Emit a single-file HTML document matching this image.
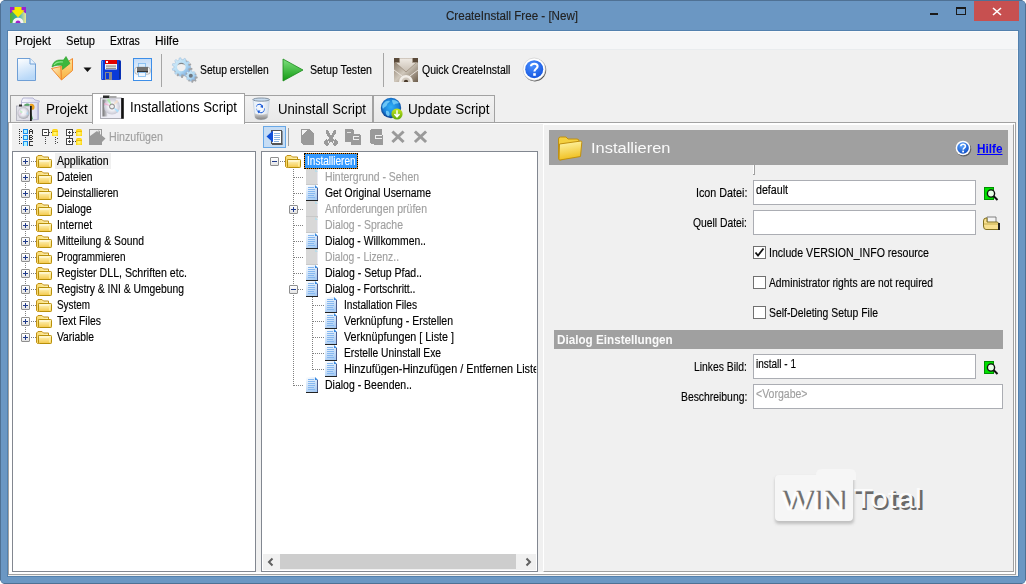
<!DOCTYPE html>
<html><head><meta charset="utf-8"><style>
html,body{margin:0;padding:0;}
body{width:1026px;height:584px;position:relative;overflow:hidden;background:#fff;font-family:"Liberation Sans",sans-serif;}
</style></head><body>
<div style="position:absolute;left:0px;top:0px;width:1026px;height:584px;background:#6b97c3;box-shadow:inset 0 0 0 1px #4f7194;border-radius:4px"></div><div style="position:absolute;left:7px;top:30px;width:1012px;height:547px;background:#5381ae"></div><div style="position:absolute;left:8px;top:31px;width:1010px;height:545px;background:#f0f0f0"></div><div style="position:absolute;left:8px;top:31px;width:1010px;height:1px;background:#fbfbfb"></div><div style="position:absolute;left:1017px;top:31px;width:1px;height:545px;background:#fafafa"></div><div style="position:absolute;left:8px;top:32px;width:1010px;height:17px;background:#f5f6f7"></div><div style="position:absolute;left:8px;top:49px;width:1010px;height:1px;background:#e9ecee"></div><svg style="position:absolute;left:10px;top:7px" width="16" height="16" viewBox="0 0 16 16">
<defs><linearGradient id="gl" x1="0" y1="0" x2="1" y2="0"><stop offset="0" stop-color="#58b028"/><stop offset="0.5" stop-color="#28a8c8"/><stop offset="1" stop-color="#f0e890"/></linearGradient></defs>
<rect width="16" height="16" fill="url(#gl)"/>
<path d="M0 0 H5 V3 L0 6.5Z M16 0 H11 V3 L16 6.5Z" fill="#9a20d0"/>
<path d="M4.5 0 H11.5 V3 L14.5 3.5 L8 10.5 L1.5 3.5 L4.5 3Z" fill="#f4ec00"/>
<path d="M2.5 16 A5.5 5.5 0 0 1 13.5 16Z" fill="#f4f4f4"/><path d="M5.5 16 A2.5 2.5 0 0 1 10.5 16Z" fill="#a020c8"/>
</svg><svg style="position:absolute;left:0;top:0" width="1026" height="584" viewBox="0 0 1026 584"><g fill="#fff">
<path d="M0 0 H4 Q1 1 0 4Z"/><path d="M1026 0 H1022 Q1025 1 1026 4Z"/><path d="M0 584 H4 Q1 583 0 580Z"/><path d="M1026 584 H1022 Q1025 583 1026 580Z"/></g></svg><div style="position:absolute;left:974px;top:1px;width:45px;height:20px;background:#c75050"></div><svg style="position:absolute;left:992px;top:7px" width="10" height="9" viewBox="0 0 10 9"><path d="M1 1 L9 8 M9 1 L1 8" stroke="#fff" stroke-width="1.6"/></svg><div style="position:absolute;left:930px;top:13px;width:8px;height:2px;background:#1a1a1a"></div><div style="position:absolute;left:956px;top:7px;width:10px;height:8px;box-sizing:border-box;border:1px solid #1a1a1a;border-top-width:2px"></div><svg style="position:absolute;left:16px;top:57px" width="21" height="25" viewBox="0 0 21 25">
<defs><linearGradient id="nd" x1="0" y1="0" x2="0.3" y2="1"><stop offset="0" stop-color="#ffffff"/><stop offset="1" stop-color="#b8d8f8"/></linearGradient></defs>
<path d="M1.5 1.5 H14 L19.5 7 V23.5 H1.5Z" fill="url(#nd)" stroke="#6f9fd6" stroke-width="1"/>
<path d="M14 1.5 V7 H19.5" fill="#e8f2fc" stroke="#6f9fd6" stroke-width="1"/>
</svg><svg style="position:absolute;left:46px;top:54px" width="32" height="30" viewBox="0 0 32 30">
<defs><linearGradient id="of" x1="0" y1="0" x2="1" y2="1"><stop offset="0" stop-color="#fff0c8"/><stop offset="1" stop-color="#f8b040"/></linearGradient>
<linearGradient id="of2" x1="0" y1="0" x2="0" y2="1"><stop offset="0" stop-color="#ffe090"/><stop offset="1" stop-color="#f8b040"/></linearGradient></defs>
<path d="M5.5 14.5 L15 12.5 L15.5 26 Z" fill="url(#of)" stroke="#f08a30" stroke-width="1"/>
<path d="M15 12.5 L26.5 4.5 V16.5 L15.5 26 Z" fill="url(#of2)" stroke="#f08a30" stroke-width="1"/>
<path d="M6 13 C7 8 10 6 14 6 H17.5 L20 2.5 L24 9.5 L16.5 15.5 L16.5 11.5 C13 11 9 11 6 13 Z" fill="#3cb83c" stroke="#2a9a2a" stroke-width="0.6"/>
<path d="M8 11 C10 8 13 7.5 17 8" fill="none" stroke="#8ae88a" stroke-width="1.2"/>
</svg><svg style="position:absolute;left:83px;top:67px" width="9" height="6" viewBox="0 0 9 6"><path d="M0.5 0.5 H8.5 L4.5 5Z" fill="#111"/></svg><svg style="position:absolute;left:101px;top:60px" width="20" height="20" viewBox="0 0 20 20">
<rect x="0" y="0" width="20" height="20" rx="1.5" fill="#0a3ad8"/>
<rect x="0.5" y="1" width="1.5" height="18" fill="#4a8af8"/><rect x="18" y="1" width="1.5" height="18" fill="#0a2a90"/>
<rect x="4" y="0" width="12" height="4" fill="#e00000"/><rect x="5" y="1" width="2" height="2" fill="#fff"/>
<rect x="4" y="4" width="12" height="5.5" fill="#f4f2ee"/>
<rect x="5" y="5.6" width="10" height="0.9" fill="#6a6a6a"/><rect x="5" y="7.8" width="10" height="0.9" fill="#6a6a6a"/>
<rect x="4" y="12" width="7" height="8" fill="#8a8a8a"/><rect x="5" y="13" width="3" height="6" fill="#0a3ad8"/>
</svg><div style="position:absolute;left:133px;top:58px;width:19px;height:23px;box-sizing:border-box;border:1px solid #3d8ee8;background:linear-gradient(#c4dcf8,#ffffff)"></div><svg style="position:absolute;left:134px;top:62px" width="17" height="16" viewBox="0 0 17 16">
<rect x="4.5" y="1.5" width="7" height="4" fill="#d8ecff" stroke="#7ab8f0" stroke-width="0.8"/>
<rect x="0.8" y="5.2" width="15.4" height="7" rx="2.5" fill="#f4f4f4" stroke="#a0a0a0" stroke-width="0.7"/>
<rect x="3" y="5" width="11" height="4" fill="#707070"/><rect x="3" y="9" width="11" height="1.5" fill="#303030"/>
<rect x="4.5" y="10.5" width="7" height="4" fill="#eef6ff" stroke="#7ab8f0" stroke-width="0.8"/>
</svg><div style="position:absolute;left:161px;top:54px;width:1px;height:33px;background:#a6a6a6"></div><svg style="position:absolute;left:170px;top:56px" width="28" height="28" viewBox="0 0 28 28">
<defs><linearGradient id="gr" x1="0" y1="0" x2="1" y2="1"><stop offset="0" stop-color="#d8eefa"/><stop offset="0.6" stop-color="#b0daf4"/><stop offset="1" stop-color="#6a9ad8"/></linearGradient></defs>
<path d="M19.61 10.64 L21.45 10.88 L21.45 12.72 L19.61 12.96 L19.07 14.78 L20.50 15.98 L19.50 17.52 L17.82 16.73 L16.39 17.97 L16.94 19.75 L15.27 20.51 L14.28 18.93 L12.41 19.20 L11.91 20.99 L10.09 20.73 L10.11 18.87 L8.39 18.08 L7.00 19.32 L5.61 18.12 L6.64 16.57 L5.61 14.97 L3.78 15.26 L3.26 13.50 L4.96 12.75 L4.96 10.85 L3.26 10.10 L3.78 8.34 L5.61 8.63 L6.64 7.03 L5.61 5.48 L7.00 4.28 L8.39 5.52 L10.11 4.73 L10.09 2.87 L11.91 2.61 L12.41 4.40 L14.28 4.67 L15.27 3.09 L16.94 3.85 L16.39 5.63 L17.82 6.87 L19.50 6.08 L20.50 7.62 L19.07 8.82Z" fill="#404850" opacity="0.45" transform="translate(0.9,1.1)"/>
<path d="M18.61 9.84 L20.45 10.08 L20.45 11.92 L18.61 12.16 L18.07 13.98 L19.50 15.18 L18.50 16.72 L16.82 15.93 L15.39 17.17 L15.94 18.95 L14.27 19.71 L13.28 18.13 L11.41 18.40 L10.91 20.19 L9.09 19.93 L9.11 18.07 L7.39 17.28 L6.00 18.52 L4.61 17.32 L5.64 15.77 L4.61 14.17 L2.78 14.46 L2.26 12.70 L3.96 11.95 L3.96 10.05 L2.26 9.30 L2.78 7.54 L4.61 7.83 L5.64 6.23 L4.61 4.68 L6.00 3.48 L7.39 4.72 L9.11 3.93 L9.09 2.07 L10.91 1.81 L11.41 3.60 L13.28 3.87 L14.27 2.29 L15.94 3.05 L15.39 4.83 L16.82 6.07 L18.50 5.28 L19.50 6.82 L18.07 8.02Z" fill="url(#gr)" stroke="#98b8d8" stroke-width="0.5"/>
<circle cx="11.3" cy="11" r="4.3" fill="#f0f0f0"/>
<path d="M7 11 A4.3 4.3 0 0 1 15.6 11 A4.3 3 0 0 0 7 11Z" fill="#505860" opacity="0.7"/>
<path d="M25.60 19.60 L26.85 19.76 L26.85 21.24 L25.60 21.40 L25.04 22.76 L25.81 23.76 L24.76 24.81 L23.76 24.04 L22.40 24.60 L22.24 25.85 L20.76 25.85 L20.60 24.60 L19.24 24.04 L18.24 24.81 L17.19 23.76 L17.96 22.76 L17.40 21.40 L16.15 21.24 L16.15 19.76 L17.40 19.60 L17.96 18.24 L17.19 17.24 L18.24 16.19 L19.24 16.96 L20.60 16.40 L20.76 15.15 L22.24 15.15 L22.40 16.40 L23.76 16.96 L24.76 16.19 L25.81 17.24 L25.04 18.24Z" fill="#404850" opacity="0.45" transform="translate(0.8,1)"/>
<path d="M24.90 18.80 L26.15 18.96 L26.15 20.44 L24.90 20.60 L24.34 21.96 L25.11 22.96 L24.06 24.01 L23.06 23.24 L21.70 23.80 L21.54 25.05 L20.06 25.05 L19.90 23.80 L18.54 23.24 L17.54 24.01 L16.49 22.96 L17.26 21.96 L16.70 20.60 L15.45 20.44 L15.45 18.96 L16.70 18.80 L17.26 17.44 L16.49 16.44 L17.54 15.39 L18.54 16.16 L19.90 15.60 L20.06 14.35 L21.54 14.35 L21.70 15.60 L23.06 16.16 L24.06 15.39 L25.11 16.44 L24.34 17.44Z" fill="url(#gr)" stroke="#98b8d8" stroke-width="0.5"/>
<circle cx="20.8" cy="19.7" r="2" fill="#707880"/>
</svg><svg style="position:absolute;left:282px;top:58px" width="22" height="24" viewBox="0 0 22 24">
<defs><linearGradient id="pl" x1="0" y1="0" x2="0" y2="1"><stop offset="0" stop-color="#7ee07e"/><stop offset="1" stop-color="#119a11"/></linearGradient></defs>
<path d="M1 1 L21 12 L1 23Z" fill="url(#pl)" stroke="#1a8a1a" stroke-width="0.8"/>
</svg><div style="position:absolute;left:383px;top:53px;width:1px;height:34px;background:#a6a6a6"></div><svg style="position:absolute;left:394px;top:58px" width="24" height="24" viewBox="0 0 24 24">
<defs><linearGradient id="qc" x1="0" y1="0" x2="1" y2="1"><stop offset="0" stop-color="#7a6a58"/><stop offset="0.5" stop-color="#d0c8bc"/><stop offset="1" stop-color="#6e5e4c"/></linearGradient>
<linearGradient id="qa" x1="0" y1="0" x2="0" y2="1"><stop offset="0" stop-color="#f0ebe4"/><stop offset="1" stop-color="#c8beb2"/></linearGradient></defs>
<rect width="24" height="24" fill="url(#qc)"/>
<path d="M0 0 H5 V4 L1 4 L0 5Z M24 0 H19 V4 L23 4 L24 5Z" fill="#5a4a3a"/>
<path d="M5.5 0 H18.5 V4.5 L22.5 4.5 L12 14 L1.5 4.5 L5.5 4.5Z" fill="url(#qa)" stroke="#8a7a68" stroke-width="0.6"/>
<path d="M0 12 L12 21 L24 12" fill="none" stroke="#e8e2da" stroke-width="1"/>
<circle cx="12" cy="24" r="7" fill="#f2eee8"/><circle cx="12" cy="24" r="4.5" fill="#d0c8be"/><circle cx="12" cy="24" r="2.2" fill="#4a3a2a"/>
</svg><svg style="position:absolute;left:522px;top:57px" width="25" height="25" viewBox="0 0 25 25">
<defs><radialGradient id="hb" cx="0.4" cy="0.3" r="0.7"><stop offset="0" stop-color="#4a90ff"/><stop offset="1" stop-color="#1858e0"/></radialGradient></defs>
<circle cx="12.9" cy="13.1" r="11.3" fill="#222" opacity="0.75"/>
<circle cx="12.2" cy="12.2" r="11.2" fill="#fff" stroke="#c8c8c8" stroke-width="0.6"/>
<circle cx="12.2" cy="12.2" r="9" fill="url(#hb)"/>
<path d="M9 9.3 C9 5.8 15.6 5.8 15.6 9.3 C15.6 11.8 12.6 11.8 12.4 14.5" fill="none" stroke="#fff" stroke-width="2.1"/>
<rect x="11.2" y="16.2" width="2.6" height="2.6" fill="#fff"/>
</svg><div style="position:absolute;left:8px;top:122px;width:1008px;height:453px;box-sizing:border-box;border:1px solid #a2a2a2;background:#fff"></div><div style="position:absolute;left:10px;top:95px;width:83px;height:27px;box-sizing:border-box;border:1px solid #a2a2a2;border-bottom:none;background:linear-gradient(#f2f2f2,#e8e8e8)"></div><div style="position:absolute;left:244px;top:95px;width:129px;height:27px;box-sizing:border-box;border:1px solid #a2a2a2;border-bottom:none;background:linear-gradient(#f2f2f2,#e8e8e8)"></div><div style="position:absolute;left:373px;top:95px;width:122px;height:27px;box-sizing:border-box;border:1px solid #a2a2a2;border-bottom:none;background:linear-gradient(#f2f2f2,#e8e8e8)"></div><div style="position:absolute;left:92px;top:93px;width:153px;height:31px;box-sizing:border-box;border:1px solid #a2a2a2;border-bottom:none;background:#fff"></div><svg style="position:absolute;left:16px;top:97px" width="24" height="24" viewBox="0 0 24 24">
<defs><linearGradient id="bx" x1="0" y1="0" x2="1" y2="0"><stop offset="0" stop-color="#fafaff"/><stop offset="1" stop-color="#d8d8ec"/></linearGradient>
<radialGradient id="cd" cx="0.45" cy="0.45" r="0.55"><stop offset="0" stop-color="#ffffff"/><stop offset="0.5" stop-color="#e8e8f0"/><stop offset="1" stop-color="#a8a8b0"/></radialGradient></defs>
<path d="M5.5 4 L7 1 H17 L19 3 L23.5 4 L22.5 6 V22.5 L7 23.5 L5.5 22Z" fill="url(#bx)" stroke="#a8a8cc" stroke-width="0.8"/>
<path d="M6 5.5 H21.5 M21.5 5.5 V22.5" stroke="#b8b8d8" stroke-width="0.8" fill="none"/>
<path d="M8 8 C10 6 13 6 14 8 C12 10 9 10 8 8Z" fill="#58a868"/>
<path d="M14 7 C17 6 19 8 18.5 11 C18 13 16 13.5 15 12 C16 11 16 9 14 9Z" fill="#e8a020"/>
<path d="M15 15 L17 22 L15 23Z" fill="#58a868"/>
<rect x="0.5" y="9" width="14" height="14.5" fill="#e0e0e8" stroke="#9a9aa8" stroke-width="0.6"/>
<rect x="3" y="7.5" width="3" height="2" fill="#303030"/>
<circle cx="7.5" cy="16" r="6" fill="url(#cd)"/>
<path d="M4 13 L7 15 L4.5 17Z" fill="#a0e8a8" opacity="0.6"/><path d="M10 17 L12 14 L12.5 18Z" fill="#a8d8f8" opacity="0.7"/><path d="M3.5 15 L6 16.5 L3.8 18Z" fill="#f0a8e0" opacity="0.5"/>
<rect x="14" y="9" width="1.8" height="15" fill="#1a1a1a"/>
</svg><svg style="position:absolute;left:100px;top:95px" width="24" height="24" viewBox="0 0 24 24">
<defs><radialGradient id="cd2" cx="0.5" cy="0.5" r="0.5"><stop offset="0" stop-color="#fff"/><stop offset="0.3" stop-color="#d0d0d8"/><stop offset="0.45" stop-color="#f4f4f8"/><stop offset="1" stop-color="#c8c8d4"/></radialGradient>
<linearGradient id="csh" x1="0" y1="0" x2="1" y2="0"><stop offset="0" stop-color="#707070"/><stop offset="1" stop-color="#e0e0e8"/></linearGradient></defs>
<rect x="0.5" y="3" width="21" height="20.5" fill="#eeeef6" stroke="#9a9aa4" stroke-width="0.8"/>
<rect x="2.5" y="4.5" width="5" height="17" fill="url(#csh)"/>
<rect x="3" y="0.5" width="6.5" height="2.5" fill="#2a2a2a"/><rect x="9.5" y="1" width="7" height="2" fill="#a8a8a8"/>
<circle cx="12" cy="11.5" r="8" fill="url(#cd2)"/>
<path d="M12 11.5 L6.5 4.5 A8 8 0 0 1 9.5 3.8Z" fill="#a8f0a0" opacity="0.8"/>
<path d="M12 11.5 L4.2 9.5 A8 8 0 0 1 4.8 7.8Z" fill="#f8a8d0" opacity="0.8"/>
<path d="M12 11.5 L19 15.5 A8 8 0 0 1 17.5 17.5Z" fill="#a8e0ff" opacity="0.9"/>
<path d="M12 11.5 L16.5 4.8 A8 8 0 0 1 18.5 6.8Z" fill="#f8e0c8" opacity="0.8"/>
<circle cx="12" cy="11.5" r="2.4" fill="#f0f0f0" stroke="#808080" stroke-width="0.9"/>
<rect x="21.2" y="3" width="2.6" height="20.8" fill="#111"/>
</svg><svg style="position:absolute;left:252px;top:97px" width="20" height="24" viewBox="0 0 20 24">
<defs><linearGradient id="tr" x1="0" y1="0" x2="1" y2="0"><stop offset="0" stop-color="#e4eef8"/><stop offset="0.5" stop-color="#f8fbfe"/><stop offset="1" stop-color="#d0dcea"/></linearGradient>
<linearGradient id="trb" x1="0" y1="0" x2="0" y2="1"><stop offset="0" stop-color="#d8d8d8"/><stop offset="1" stop-color="#808080"/></linearGradient></defs>
<path d="M1 2.5 L3 20.5 C5 23.5 13 23.5 15.5 20.5 L17.5 2.5Z" fill="url(#tr)" stroke="#b8c8d8" stroke-width="0.6"/>
<path d="M2.5 16 C6 18 12 18 16 16 L15.5 20.5 C13 23.5 5 23.5 3 20.5Z" fill="url(#trb)"/>
<ellipse cx="9.2" cy="2.6" rx="8.3" ry="1.6" fill="#c8dcf0" stroke="#7a8a9a" stroke-width="0.9"/>
<path d="M4.5 10 C5 7.5 8 7 9.5 9 L8 10 L11 11 L11 8 L10.5 8.5 C8.5 5.5 4.5 6.5 4 10Z" fill="#1a5ad8"/>
<path d="M12 11.5 C12.5 14 10 16 7.5 15 L8.5 13.5 L5 13.5 L6.5 16.5 L7 15.8 C10 17.5 13.5 14.5 12.5 11Z" fill="#1a5ad8"/>
<path d="M4 11 L5.5 13 L4 13.5Z" fill="#8ab0f0"/>
</svg><svg style="position:absolute;left:380px;top:97px" width="23" height="23" viewBox="0 0 23 23">
<defs><radialGradient id="gb" cx="0.5" cy="0.45" r="0.55"><stop offset="0" stop-color="#30b0f8"/><stop offset="0.7" stop-color="#1a80d8"/><stop offset="1" stop-color="#0a3a88"/></radialGradient>
<linearGradient id="gg" x1="0" y1="0" x2="0" y2="1"><stop offset="0" stop-color="#c8e820"/><stop offset="1" stop-color="#60a808"/></linearGradient></defs>
<circle cx="11" cy="11" r="10.2" fill="url(#gb)"/>
<path d="M3 7 C5 4 8 3 10 4 C9 6 7 6 7 8 C6 10 4 10 3 12 C2 10 2 9 3 7Z M12 3 C15 2.5 18 4 19 6 C17 7 15 6 14 8 C13 7 12 5 12 3Z M6 14 C8 13 10 15 9.5 18 C9 20 7 19 6 17Z" fill="#78d0fa" opacity="0.85"/>
<circle cx="17" cy="17" r="5.6" fill="url(#gg)"/>
<path d="M17 13.3 V19.5 M14.5 17 L17 19.8 L19.5 17" fill="none" stroke="#fff" stroke-width="1.5"/>
</svg><div style="position:absolute;left:12px;top:124px;width:531px;height:448px;background:#f0f0f0"></div><div style="position:absolute;left:543px;top:124px;width:471px;height:448px;box-sizing:border-box;background:#f0f0f0;border:1px solid #fff;border-right-color:#a0a0a0;border-bottom-color:#a0a0a0"></div><svg style="position:absolute;left:19px;top:129px" width="16" height="17" viewBox="0 0 16 17" shape-rendering="crispEdges">
<g fill="#333"><rect x="0" y="0" width="1" height="1"/><rect x="0" y="2" width="1" height="1"/><rect x="0" y="4" width="1" height="1"/><rect x="0" y="6" width="1" height="1"/><rect x="0" y="8" width="1" height="1"/><rect x="0" y="10" width="1" height="1"/><rect x="0" y="12" width="1" height="1"/><rect x="0" y="14" width="1" height="1"/>
<rect x="2" y="2" width="1" height="1"/><rect x="2" y="8" width="1" height="1"/><rect x="2" y="14" width="1" height="1"/></g>
<g fill="#1a8ff0"><rect x="4" y="0" width="5" height="5"/><rect x="4" y="6" width="5" height="5"/><rect x="4" y="12" width="5" height="5"/></g>
<g fill="#b0f4ff"><rect x="5" y="1" width="3" height="3"/><rect x="5" y="7" width="3" height="3"/><rect x="5" y="13" width="3" height="4"/></g>
<g fill="#333"><rect x="10" y="1" width="1" height="4"/><rect x="13" y="1" width="1" height="4"/><rect x="11" y="0" width="2" height="1"/><rect x="10" y="2" width="4" height="1"/>
<rect x="10" y="6" width="1" height="5"/><rect x="11" y="6" width="2" height="1"/><rect x="11" y="8" width="2" height="1"/><rect x="11" y="10" width="2" height="1"/><rect x="13" y="7" width="1" height="1"/><rect x="13" y="9" width="1" height="1"/>
<rect x="10" y="12" width="1" height="5"/><rect x="11" y="12" width="3" height="1"/><rect x="11" y="16" width="3" height="1"/></g>
</svg><svg style="position:absolute;left:42px;top:129px" width="16" height="16" viewBox="0 0 16 16" shape-rendering="crispEdges">
<defs><radialGradient id="yf" cx="0.5" cy="0.6" r="0.6"><stop offset="0" stop-color="#ffff90"/><stop offset="1" stop-color="#ffd000"/></radialGradient></defs>
<rect x="0.5" y="0.5" width="6" height="6" fill="#fff" stroke="#444"/><rect x="2" y="3" width="3" height="1" fill="#444"/>
<g fill="#444"><rect x="7" y="3" width="1" height="1"/><rect x="9" y="3" width="1" height="1"/>
<rect x="3" y="8" width="1" height="1"/><rect x="3" y="10" width="1" height="1"/><rect x="3" y="12" width="1" height="1"/><rect x="3" y="14" width="1" height="1"/>
<rect x="13" y="8" width="1" height="1"/><rect x="13" y="10" width="1" height="1"/><rect x="13" y="12" width="1" height="1"/><rect x="13" y="14" width="1" height="1"/><rect x="15" y="9" width="1" height="1"/><rect x="15" y="13" width="1" height="1"/></g>
<path d="M10 2 Q10 0 12 0 H14 Q16 0 16 2 V7 H10Z" fill="url(#yf)" shape-rendering="auto"/>
<rect x="10" y="2" width="6" height="1" fill="#f0c000"/>
</svg><svg style="position:absolute;left:66px;top:129px" width="16" height="16" viewBox="0 0 16 16" shape-rendering="crispEdges">
<rect x="0.5" y="0.5" width="6" height="6" fill="#fff" stroke="#444"/><path d="M2 3.5 H5 M3.5 2 V5" stroke="#444"/>
<rect x="0.5" y="9.5" width="6" height="6" fill="#fff" stroke="#444"/><path d="M2 12.5 H5 M3.5 11 V14" stroke="#444"/>
<rect x="3" y="7" width="1" height="2" fill="#444"/>
<rect x="7" y="3" width="1" height="1" fill="#444"/><rect x="9" y="3" width="1" height="1" fill="#444"/><rect x="7" y="12" width="1" height="1" fill="#444"/><rect x="9" y="12" width="1" height="1" fill="#444"/>
<path d="M10 2 Q10 0 12 0 H14 Q16 0 16 2 V7 H10Z" fill="url(#yf)" shape-rendering="auto"/><rect x="10" y="2" width="6" height="1" fill="#f0c000"/>
<path d="M10 11 Q10 9 12 9 H14 Q16 9 16 11 V16 H10Z" fill="url(#yf)" shape-rendering="auto"/><rect x="10" y="11" width="6" height="1" fill="#f0c000"/>
</svg><svg style="position:absolute;left:89px;top:129px" width="17" height="16" viewBox="0 0 17 16">
<rect x="0" y="0" width="13" height="16" fill="#9a9a9a"/>
<rect x="1" y="1" width="11" height="6" fill="#eeeeee"/>
<path d="M1 7 L8 2 L9.5 3.5 L9.5 1 L11 2.5 V5 L16.5 9.5 L13 13 V7Z" fill="#9a9a9a"/>
</svg><div style="position:absolute;left:263px;top:126px;width:23px;height:22px;box-sizing:border-box;border:1px solid #69a8e6;background:#c6ddf5"></div><svg style="position:absolute;left:266px;top:129px" width="17" height="16" viewBox="0 0 17 16">
<rect x="5.5" y="1.5" width="10" height="13" fill="#fff" stroke="#555" stroke-width="1"/>
<rect x="15" y="2" width="1.5" height="13.5" fill="#555"/><rect x="6" y="14.5" width="10.5" height="1.5" fill="#555"/>
<g stroke="#8ab4e0" stroke-width="1"><path d="M8 4.5 H14 M8 6.5 H14 M8 8.5 H14 M8 10.5 H14 M8 12.5 H13"/></g>
<path d="M0.5 7.5 L7 1.5 V13.5Z" fill="#1050d8"/>
</svg><div style="position:absolute;left:288px;top:128px;width:1px;height:18px;background:#a0a0a0"></div><svg style="position:absolute;left:300px;top:129px" width="132" height="17" viewBox="0 0 132 17" fill="#9a9a9a" shape-rendering="crispEdges">
<path d="M1 0 H9 L14 5 V16 H3 L1 14Z"/><path d="M2 1 H7 L2 6Z" fill="#f4f4f4"/>
<g transform="translate(26,1)"><path d="M0 0 H2 L5 6 L8 0 H10 V3 L7 8 L8 10 A2.5 3 0 1 1 7 14 L5 11 L3 14 A2.5 3 0 1 1 2 10 L3 8 L0 3Z"/><path d="M2 11 H3 V13 H2Z M7 11 H8 V13 H7Z" fill="#f0f0f0"/></g>
<g transform="translate(45,0)"><path d="M0 0 H7 L9 2 V5 H6 V13 H0Z"/><rect x="2" y="3" width="4" height="1" fill="#e4e4e4"/><path d="M6 5 H14 L16 7 V16 H6Z"/><rect x="8" y="7" width="6" height="4" fill="#f0f0f0"/><rect x="9" y="8" width="5" height="2" fill="#9a9a9a"/></g>
<g transform="translate(70,0)"><path d="M1 0 H11 L12 1 V6 L13 7 V16 H4 L3 15 H1 L0 14 V1Z"/><rect x="5" y="6" width="7" height="4" fill="#f0f0f0"/><rect x="6" y="7" width="6" height="2" fill="#9a9a9a"/></g>
</svg><svg style="position:absolute;left:391px;top:130px" width="40" height="14" viewBox="0 0 40 14"><g stroke="#9a9a9a" stroke-width="3" stroke-linecap="square"><path d="M2.5 2.5 L11.5 11 M11.5 2.5 L2.5 11"/><path d="M25 2.5 L34 11 M34 2.5 L25 11"/></g></svg><div style="position:absolute;left:12px;top:151px;width:244px;height:421px;box-sizing:border-box;border:1px solid #828790;background:#fff"></div><div style="position:absolute;left:261px;top:151px;width:277px;height:421px;box-sizing:border-box;border:1px solid #828790;background:#fff"></div><svg style="position:absolute;left:0;top:0" width="1026" height="584" shape-rendering="crispEdges"><g stroke="#808080" stroke-width="1" stroke-dasharray="1 1" fill="none"><path d="M31 161.5 H36"/><path d="M31 177.5 H36"/><path d="M31 193.5 H36"/><path d="M31 209.5 H36"/><path d="M31 225.5 H36"/><path d="M31 241.5 H36"/><path d="M31 257.5 H36"/><path d="M31 273.5 H36"/><path d="M31 289.5 H36"/><path d="M31 305.5 H36"/><path d="M31 321.5 H36"/><path d="M31 337.5 H36"/><path d="M25.5 167 V173"/><path d="M25.5 183 V189"/><path d="M25.5 199 V205"/><path d="M25.5 215 V221"/><path d="M25.5 231 V237"/><path d="M25.5 247 V253"/><path d="M25.5 263 V269"/><path d="M25.5 279 V285"/><path d="M25.5 295 V301"/><path d="M25.5 311 V317"/><path d="M25.5 327 V333"/><path d="M280 161.5 H285"/><path d="M294 177.5 H304"/><path d="M294 193.5 H304"/><path d="M298 209.5 H304"/><path d="M294 225.5 H304"/><path d="M294 241.5 H304"/><path d="M294 257.5 H304"/><path d="M294 273.5 H304"/><path d="M298 289.5 H304"/><path d="M313 305.5 H324"/><path d="M313 321.5 H324"/><path d="M313 337.5 H324"/><path d="M313 353.5 H324"/><path d="M313 369.5 H324"/><path d="M294 385.5 H304"/><path d="M293.5 169 V386"/><path d="M312.5 297 V370"/></g></svg><svg width="0" height="0" style="position:absolute"><defs>
<linearGradient id="fg" x1="0" y1="0" x2="0" y2="1"><stop offset="0" stop-color="#fff8c8"/><stop offset="1" stop-color="#f4c848"/></linearGradient>
<linearGradient id="fgb" x1="0" y1="0" x2="1" y2="0"><stop offset="0" stop-color="#f8d868"/><stop offset="1" stop-color="#fff4b8"/></linearGradient>
<g id="fold"><path d="M0.5 13.5 V4 L2 2.5 H6 L7.5 4 H12.5 V6.5 H2.5 V14.5 H1.5 Z" fill="url(#fgb)" stroke="#c09018" stroke-width="1"/>
<rect x="2.5" y="6.5" width="13" height="8" rx="0.8" fill="url(#fg)" stroke="#b8900a" stroke-width="1"/>
<rect x="3.5" y="7.5" width="11" height="1" fill="#fffce8"/><rect x="13" y="7.5" width="1.5" height="6" fill="#fff0a0" opacity="0.8"/></g>
<linearGradient id="dg" x1="0" y1="0" x2="0.4" y2="1"><stop offset="0" stop-color="#ffffff"/><stop offset="1" stop-color="#a8ccf4"/></linearGradient>
<g id="doc"><path d="M0 0 H9 L12 3 V16 H0Z" fill="url(#dg)"/><path d="M11.5 3 V15.5 H0" fill="none" stroke="#4a5a8a" stroke-width="1"/><rect x="0" y="15" width="12" height="1" fill="#222"/>
<path d="M9 0 L12 3 H9Z" fill="#3a8ae0"/>
<g stroke="#86b8f0" stroke-width="1"><path d="M2 2.5 H8 M2 4.5 H9 M2 6.5 H9 M2 8.5 H9 M2 10.5 H8 M2 12.5 H9"/></g></g>
<g id="docd"><rect x="0" y="0" width="12" height="16" fill="#d8d8d8"/><rect x="11" y="1" width="1" height="15" fill="#e8e8f0"/><rect x="0" y="15" width="12" height="1" fill="#c8c8c8"/><path d="M9 0 L12 3 H9Z" fill="#b8dce8"/></g>
</defs></svg><div style="position:absolute;left:21px;top:157px;width:9px;height:9px;box-sizing:border-box;border:1px solid #8f8f8f;border-radius:1px;background:linear-gradient(#fff,#e4e4e4)"></div><div style="position:absolute;left:23px;top:161px;width:5px;height:1px;background:#1f3a8a"></div><div style="position:absolute;left:25px;top:159px;width:1px;height:5px;background:#1f3a8a"></div><svg style="position:absolute;left:36px;top:153px" width="16" height="16" viewBox="0 0 16 16"><use href="#fold"/></svg><div style="position:absolute;left:21px;top:173px;width:9px;height:9px;box-sizing:border-box;border:1px solid #8f8f8f;border-radius:1px;background:linear-gradient(#fff,#e4e4e4)"></div><div style="position:absolute;left:23px;top:177px;width:5px;height:1px;background:#1f3a8a"></div><div style="position:absolute;left:25px;top:175px;width:1px;height:5px;background:#1f3a8a"></div><svg style="position:absolute;left:36px;top:169px" width="16" height="16" viewBox="0 0 16 16"><use href="#fold"/></svg><div style="position:absolute;left:21px;top:189px;width:9px;height:9px;box-sizing:border-box;border:1px solid #8f8f8f;border-radius:1px;background:linear-gradient(#fff,#e4e4e4)"></div><div style="position:absolute;left:23px;top:193px;width:5px;height:1px;background:#1f3a8a"></div><div style="position:absolute;left:25px;top:191px;width:1px;height:5px;background:#1f3a8a"></div><svg style="position:absolute;left:36px;top:185px" width="16" height="16" viewBox="0 0 16 16"><use href="#fold"/></svg><div style="position:absolute;left:21px;top:205px;width:9px;height:9px;box-sizing:border-box;border:1px solid #8f8f8f;border-radius:1px;background:linear-gradient(#fff,#e4e4e4)"></div><div style="position:absolute;left:23px;top:209px;width:5px;height:1px;background:#1f3a8a"></div><div style="position:absolute;left:25px;top:207px;width:1px;height:5px;background:#1f3a8a"></div><svg style="position:absolute;left:36px;top:201px" width="16" height="16" viewBox="0 0 16 16"><use href="#fold"/></svg><div style="position:absolute;left:21px;top:221px;width:9px;height:9px;box-sizing:border-box;border:1px solid #8f8f8f;border-radius:1px;background:linear-gradient(#fff,#e4e4e4)"></div><div style="position:absolute;left:23px;top:225px;width:5px;height:1px;background:#1f3a8a"></div><div style="position:absolute;left:25px;top:223px;width:1px;height:5px;background:#1f3a8a"></div><svg style="position:absolute;left:36px;top:217px" width="16" height="16" viewBox="0 0 16 16"><use href="#fold"/></svg><div style="position:absolute;left:21px;top:237px;width:9px;height:9px;box-sizing:border-box;border:1px solid #8f8f8f;border-radius:1px;background:linear-gradient(#fff,#e4e4e4)"></div><div style="position:absolute;left:23px;top:241px;width:5px;height:1px;background:#1f3a8a"></div><div style="position:absolute;left:25px;top:239px;width:1px;height:5px;background:#1f3a8a"></div><svg style="position:absolute;left:36px;top:233px" width="16" height="16" viewBox="0 0 16 16"><use href="#fold"/></svg><div style="position:absolute;left:21px;top:253px;width:9px;height:9px;box-sizing:border-box;border:1px solid #8f8f8f;border-radius:1px;background:linear-gradient(#fff,#e4e4e4)"></div><div style="position:absolute;left:23px;top:257px;width:5px;height:1px;background:#1f3a8a"></div><div style="position:absolute;left:25px;top:255px;width:1px;height:5px;background:#1f3a8a"></div><svg style="position:absolute;left:36px;top:249px" width="16" height="16" viewBox="0 0 16 16"><use href="#fold"/></svg><div style="position:absolute;left:21px;top:269px;width:9px;height:9px;box-sizing:border-box;border:1px solid #8f8f8f;border-radius:1px;background:linear-gradient(#fff,#e4e4e4)"></div><div style="position:absolute;left:23px;top:273px;width:5px;height:1px;background:#1f3a8a"></div><div style="position:absolute;left:25px;top:271px;width:1px;height:5px;background:#1f3a8a"></div><svg style="position:absolute;left:36px;top:265px" width="16" height="16" viewBox="0 0 16 16"><use href="#fold"/></svg><div style="position:absolute;left:21px;top:285px;width:9px;height:9px;box-sizing:border-box;border:1px solid #8f8f8f;border-radius:1px;background:linear-gradient(#fff,#e4e4e4)"></div><div style="position:absolute;left:23px;top:289px;width:5px;height:1px;background:#1f3a8a"></div><div style="position:absolute;left:25px;top:287px;width:1px;height:5px;background:#1f3a8a"></div><svg style="position:absolute;left:36px;top:281px" width="16" height="16" viewBox="0 0 16 16"><use href="#fold"/></svg><div style="position:absolute;left:21px;top:301px;width:9px;height:9px;box-sizing:border-box;border:1px solid #8f8f8f;border-radius:1px;background:linear-gradient(#fff,#e4e4e4)"></div><div style="position:absolute;left:23px;top:305px;width:5px;height:1px;background:#1f3a8a"></div><div style="position:absolute;left:25px;top:303px;width:1px;height:5px;background:#1f3a8a"></div><svg style="position:absolute;left:36px;top:297px" width="16" height="16" viewBox="0 0 16 16"><use href="#fold"/></svg><div style="position:absolute;left:21px;top:317px;width:9px;height:9px;box-sizing:border-box;border:1px solid #8f8f8f;border-radius:1px;background:linear-gradient(#fff,#e4e4e4)"></div><div style="position:absolute;left:23px;top:321px;width:5px;height:1px;background:#1f3a8a"></div><div style="position:absolute;left:25px;top:319px;width:1px;height:5px;background:#1f3a8a"></div><svg style="position:absolute;left:36px;top:313px" width="16" height="16" viewBox="0 0 16 16"><use href="#fold"/></svg><div style="position:absolute;left:21px;top:333px;width:9px;height:9px;box-sizing:border-box;border:1px solid #8f8f8f;border-radius:1px;background:linear-gradient(#fff,#e4e4e4)"></div><div style="position:absolute;left:23px;top:337px;width:5px;height:1px;background:#1f3a8a"></div><div style="position:absolute;left:25px;top:335px;width:1px;height:5px;background:#1f3a8a"></div><svg style="position:absolute;left:36px;top:329px" width="16" height="16" viewBox="0 0 16 16"><use href="#fold"/></svg><div style="position:absolute;left:55px;top:153px;width:56px;height:16px;background:#f0f0f0"></div><div style="position:absolute;left:270px;top:157px;width:9px;height:9px;box-sizing:border-box;border:1px solid #8f8f8f;border-radius:1px;background:linear-gradient(#fff,#e4e4e4)"></div><div style="position:absolute;left:272px;top:161px;width:5px;height:1px;background:#1f3a8a"></div><svg style="position:absolute;left:285px;top:153px" width="16" height="16" viewBox="0 0 16 16"><use href="#fold"/></svg><div style="position:absolute;left:304px;top:153px;width:54px;height:16px;background:#3399ff;box-sizing:border-box;border:1px solid #e88a10"></div><div style="position:absolute;left:304px;top:153px;width:54px;height:16px;box-sizing:border-box;border:1px dotted #000"></div><svg style="position:absolute;left:306px;top:169px" width="12" height="16" viewBox="0 0 12 16"><use href="#docd"/></svg><svg style="position:absolute;left:306px;top:185px" width="12" height="16" viewBox="0 0 12 16"><use href="#doc"/></svg><svg style="position:absolute;left:306px;top:201px" width="12" height="16" viewBox="0 0 12 16"><use href="#docd"/></svg><div style="position:absolute;left:289px;top:205px;width:9px;height:9px;box-sizing:border-box;border:1px solid #8f8f8f;border-radius:1px;background:linear-gradient(#fff,#e4e4e4)"></div><div style="position:absolute;left:291px;top:209px;width:5px;height:1px;background:#1f3a8a"></div><div style="position:absolute;left:293px;top:207px;width:1px;height:5px;background:#1f3a8a"></div><svg style="position:absolute;left:306px;top:217px" width="12" height="16" viewBox="0 0 12 16"><use href="#docd"/></svg><svg style="position:absolute;left:306px;top:233px" width="12" height="16" viewBox="0 0 12 16"><use href="#doc"/></svg><svg style="position:absolute;left:306px;top:249px" width="12" height="16" viewBox="0 0 12 16"><use href="#docd"/></svg><svg style="position:absolute;left:306px;top:265px" width="12" height="16" viewBox="0 0 12 16"><use href="#doc"/></svg><svg style="position:absolute;left:306px;top:281px" width="12" height="16" viewBox="0 0 12 16"><use href="#doc"/></svg><div style="position:absolute;left:289px;top:285px;width:9px;height:9px;box-sizing:border-box;border:1px solid #8f8f8f;border-radius:1px;background:linear-gradient(#fff,#e4e4e4)"></div><div style="position:absolute;left:291px;top:289px;width:5px;height:1px;background:#1f3a8a"></div><svg style="position:absolute;left:325px;top:297px" width="12" height="16" viewBox="0 0 12 16"><use href="#doc"/></svg><svg style="position:absolute;left:325px;top:313px" width="12" height="16" viewBox="0 0 12 16"><use href="#doc"/></svg><svg style="position:absolute;left:325px;top:329px" width="12" height="16" viewBox="0 0 12 16"><use href="#doc"/></svg><svg style="position:absolute;left:325px;top:345px" width="12" height="16" viewBox="0 0 12 16"><use href="#doc"/></svg><svg style="position:absolute;left:325px;top:361px" width="12" height="16" viewBox="0 0 12 16"><use href="#doc"/></svg><svg style="position:absolute;left:306px;top:377px" width="12" height="16" viewBox="0 0 12 16"><use href="#doc"/></svg><div style="position:absolute;left:263px;top:554px;width:273px;height:16px;background:#f0f0f0"></div><div style="position:absolute;left:280px;top:554px;width:236px;height:15px;background:#cdcdcd"></div><svg style="position:absolute;left:266px;top:557px" width="10" height="10" viewBox="0 0 10 10"><path d="M6.5 1.5 L3 5 L6.5 8.5" fill="none" stroke="#606060" stroke-width="2"/></svg><svg style="position:absolute;left:523px;top:557px" width="10" height="10" viewBox="0 0 10 10"><path d="M3.5 1.5 L7 5 L3.5 8.5" fill="none" stroke="#606060" stroke-width="2"/></svg><div style="position:absolute;left:549px;top:130px;width:459px;height:35px;background:#a0a0a0"></div><svg style="position:absolute;left:557px;top:135px" width="26" height="26" viewBox="0 0 26 26">
<defs><linearGradient id="bf" x1="0" y1="0" x2="0.2" y2="1"><stop offset="0" stop-color="#fff8b0"/><stop offset="1" stop-color="#f0c020"/></linearGradient></defs>
<path d="M1.5 4 Q1.5 2 3.5 2 H9 L11 4 H20 Q22 4 22 6 V20 L3 25 Q1.5 25 1.5 23Z" fill="#f4d040" stroke="#c09010" stroke-width="1"/>
<path d="M2.5 9 L24 6 Q25 6 24.8 7.5 L23.5 21.5 L3 25 Q2 25 2 23.5Z" fill="url(#bf)" stroke="#c09010" stroke-width="1"/>
</svg><svg style="position:absolute;left:955px;top:140px" width="17" height="17" viewBox="0 0 17 17">
<defs><radialGradient id="hb2" cx="0.4" cy="0.3" r="0.7"><stop offset="0" stop-color="#60a8ff"/><stop offset="1" stop-color="#1050c8"/></radialGradient></defs>
<circle cx="8.8" cy="9" r="7.5" fill="#222" opacity="0.5"/>
<circle cx="8" cy="8" r="7.3" fill="#fff"/>
<circle cx="8" cy="8" r="5.8" fill="url(#hb2)"/>
<path d="M5.8 6.2 C5.8 3.6 10.4 3.6 10.4 6.2 C10.4 7.8 8.3 7.8 8.1 9.6" fill="none" stroke="#fff" stroke-width="1.6"/>
<rect x="7.2" y="10.6" width="1.8" height="1.8" fill="#fff"/>
</svg><div style="position:absolute;left:753px;top:165px;width:1px;height:9px;background:#fff"></div><div style="position:absolute;left:754px;top:165px;width:1px;height:10px;background:#a0a0a0"></div><div style="position:absolute;left:753px;top:174px;width:1px;height:1px;background:#a0a0a0"></div><div style="position:absolute;left:753px;top:180px;width:223px;height:25px;box-sizing:border-box;border:1px solid #abadb3;background:#fff"></div><div style="position:absolute;left:753px;top:210px;width:223px;height:25px;box-sizing:border-box;border:1px solid #abadb3;background:#fff"></div><div style="position:absolute;left:753px;top:354px;width:223px;height:25px;box-sizing:border-box;border:1px solid #abadb3;background:#fff"></div><div style="position:absolute;left:753px;top:384px;width:250px;height:25px;box-sizing:border-box;border:1px solid #abadb3;background:#fff"></div><svg style="position:absolute;left:984px;top:187px" width="16" height="14" viewBox="0 0 16 14">
<rect x="0" y="0" width="10" height="13" fill="#00e000"/><rect x="0.5" y="0.5" width="9" height="12" fill="none" stroke="#009000" stroke-width="1"/>
<circle cx="7" cy="6.5" r="3.6" fill="#e8ffe8" stroke="#111" stroke-width="1.4"/>
<path d="M9.5 9 L13.5 13" stroke="#111" stroke-width="2"/>
</svg><svg style="position:absolute;left:984px;top:361px" width="16" height="14" viewBox="0 0 16 14">
<rect x="0" y="0" width="10" height="13" fill="#00e000"/><rect x="0.5" y="0.5" width="9" height="12" fill="none" stroke="#009000" stroke-width="1"/>
<circle cx="7" cy="6.5" r="3.6" fill="#e8ffe8" stroke="#111" stroke-width="1.4"/>
<path d="M9.5 9 L13.5 13" stroke="#111" stroke-width="2"/>
</svg><svg style="position:absolute;left:983px;top:216px" width="17" height="14" viewBox="0 0 17 14">
<path d="M4 1 H13 V8 H4Z" fill="#f4f4f4" stroke="#666" stroke-width="0.8"/>
<path d="M0.5 5 Q0.5 2 3 2 L4 2 V6 H14.5 L16 8 V13.5 H3 Q0.5 13.5 0.5 10Z" fill="#f8e090" stroke="#807020" stroke-width="1"/>
<path d="M1 8 H15.5" stroke="#c8b050" stroke-width="1"/>
<rect x="15" y="7" width="2" height="7" fill="#222"/>
</svg><div style="position:absolute;left:753px;top:246px;width:13px;height:13px;box-sizing:border-box;border:1px solid #707070;background:#fff"></div><svg style="position:absolute;left:753px;top:246px" width="13" height="13" viewBox="0 0 13 13"><path d="M2.5 6.5 L5 9.5 L10.5 2.5" fill="none" stroke="#111" stroke-width="1.8"/></svg><div style="position:absolute;left:753px;top:276px;width:13px;height:13px;box-sizing:border-box;border:1px solid #707070;background:#fff"></div><div style="position:absolute;left:753px;top:306px;width:13px;height:13px;box-sizing:border-box;border:1px solid #707070;background:#fff"></div><div style="position:absolute;left:554px;top:330px;width:449px;height:19px;background:#a0a0a0"></div><svg style="position:absolute;left:770px;top:466px" width="160" height="62" viewBox="0 0 160 62">
<defs><filter id="sh" x="-20%" y="-20%" width="140%" height="140%"><feGaussianBlur stdDeviation="1.5"/></filter></defs>
<rect x="5" y="11" width="79" height="47" rx="4" fill="#a0a0a0" opacity="0.6" filter="url(#sh)"/>
<rect x="5" y="9" width="78" height="46" rx="4" fill="#f6f6f6"/>
<path d="M46 9 Q46 3 52 3 H80 Q86 3 86 9 V14 H46Z" fill="#f6f6f6"/>
<g font-family="Liberation Sans" font-size="26">
<text x="13" y="43" fill="#6e6e6e" textLength="64" lengthAdjust="spacingAndGlyphs" stroke="#6e6e6e" stroke-width="0.6">WIN</text>
<text x="10.8" y="44.2" fill="#fdfdfd" textLength="64" lengthAdjust="spacingAndGlyphs" stroke="#fdfdfd" stroke-width="0.3">WIN</text>
</g><g font-family="Liberation Sans" font-weight="bold" font-size="27">
<text x="85.5" y="43.8" fill="#6a6a6a" textLength="69" lengthAdjust="spacingAndGlyphs">Total</text>
<text x="83.8" y="42" fill="#fbfbfb" font-weight="normal" textLength="68" lengthAdjust="spacingAndGlyphs">Total</text>
</g></svg>
<div style="position:absolute;left:445.90px;top:9.84px;font-size:12px;line-height:12px;color:#222;font-weight:normal;white-space:nowrap;-webkit-text-stroke:0.15px #222;transform:scaleX(0.9655);transform-origin:0 0;">CreateInstall Free - [New]</div><div style="position:absolute;left:14.90px;top:34.84px;font-size:12px;line-height:12px;color:#000;font-weight:normal;white-space:nowrap;-webkit-text-stroke:0.15px #000;transform:scaleX(0.9636);transform-origin:0 0;">Projekt</div><div style="position:absolute;left:65.90px;top:34.84px;font-size:12px;line-height:12px;color:#000;font-weight:normal;white-space:nowrap;-webkit-text-stroke:0.15px #000;transform:scaleX(0.9248);transform-origin:0 0;">Setup</div><div style="position:absolute;left:110.40px;top:34.84px;font-size:12px;line-height:12px;color:#000;font-weight:normal;white-space:nowrap;-webkit-text-stroke:0.15px #000;transform:scaleX(0.8731);transform-origin:0 0;">Extras</div><div style="position:absolute;left:154.50px;top:34.84px;font-size:12px;line-height:12px;color:#000;font-weight:normal;white-space:nowrap;-webkit-text-stroke:0.15px #000;transform:scaleX(0.9910);transform-origin:0 0;">Hilfe</div><div style="position:absolute;left:200.30px;top:64.44px;font-size:12px;line-height:12px;color:#000;font-weight:normal;white-space:nowrap;-webkit-text-stroke:0.15px #000;transform:scaleX(0.8593);transform-origin:0 0;">Setup erstellen</div><div style="position:absolute;left:309.70px;top:64.44px;font-size:12px;line-height:12px;color:#000;font-weight:normal;white-space:nowrap;-webkit-text-stroke:0.15px #000;transform:scaleX(0.8877);transform-origin:0 0;">Setup Testen</div><div style="position:absolute;left:421.70px;top:64.24px;font-size:12px;line-height:12px;color:#000;font-weight:normal;white-space:nowrap;-webkit-text-stroke:0.15px #000;transform:scaleX(0.8720);transform-origin:0 0;">Quick CreateInstall</div><div style="position:absolute;left:45.50px;top:102.15px;font-size:14px;line-height:14px;color:#000;font-weight:normal;white-space:nowrap;-webkit-text-stroke:0;transform:scaleX(0.9592);transform-origin:0 0;">Projekt</div><div style="position:absolute;left:129.70px;top:100.15px;font-size:14px;line-height:14px;color:#000;font-weight:normal;white-space:nowrap;-webkit-text-stroke:0;transform:scaleX(0.9418);transform-origin:0 0;">Installations Script</div><div style="position:absolute;left:278.40px;top:102.15px;font-size:14px;line-height:14px;color:#000;font-weight:normal;white-space:nowrap;-webkit-text-stroke:0;transform:scaleX(0.9424);transform-origin:0 0;">Uninstall Script</div><div style="position:absolute;left:408.40px;top:102.15px;font-size:14px;line-height:14px;color:#000;font-weight:normal;white-space:nowrap;-webkit-text-stroke:0;transform:scaleX(0.9619);transform-origin:0 0;">Update Script</div><div style="position:absolute;left:109.40px;top:130.84px;font-size:12px;line-height:12px;color:#a0a0a0;font-weight:normal;white-space:nowrap;-webkit-text-stroke:0.15px #a0a0a0;transform:scaleX(0.8861);transform-origin:0 0;">Hinzufügen</div><div style="position:absolute;left:56.90px;top:154.84px;font-size:12px;line-height:12px;color:#000;font-weight:normal;white-space:nowrap;-webkit-text-stroke:0.15px #000;transform:scaleX(0.8771);transform-origin:0 0;">Applikation</div><div style="position:absolute;left:56.90px;top:170.84px;font-size:12px;line-height:12px;color:#000;font-weight:normal;white-space:nowrap;-webkit-text-stroke:0.15px #000;transform:scaleX(0.8580);transform-origin:0 0;">Dateien</div><div style="position:absolute;left:56.90px;top:186.84px;font-size:12px;line-height:12px;color:#000;font-weight:normal;white-space:nowrap;-webkit-text-stroke:0.15px #000;transform:scaleX(0.8459);transform-origin:0 0;">Deinstallieren</div><div style="position:absolute;left:56.90px;top:202.84px;font-size:12px;line-height:12px;color:#000;font-weight:normal;white-space:nowrap;-webkit-text-stroke:0.15px #000;transform:scaleX(0.8525);transform-origin:0 0;">Dialoge</div><div style="position:absolute;left:56.90px;top:218.84px;font-size:12px;line-height:12px;color:#000;font-weight:normal;white-space:nowrap;-webkit-text-stroke:0.15px #000;transform:scaleX(0.8599);transform-origin:0 0;">Internet</div><div style="position:absolute;left:56.90px;top:234.84px;font-size:12px;line-height:12px;color:#000;font-weight:normal;white-space:nowrap;-webkit-text-stroke:0.15px #000;transform:scaleX(0.8637);transform-origin:0 0;">Mitteilung &amp; Sound</div><div style="position:absolute;left:56.90px;top:250.84px;font-size:12px;line-height:12px;color:#000;font-weight:normal;white-space:nowrap;-webkit-text-stroke:0.15px #000;transform:scaleX(0.8271);transform-origin:0 0;">Programmieren</div><div style="position:absolute;left:56.90px;top:266.84px;font-size:12px;line-height:12px;color:#000;font-weight:normal;white-space:nowrap;-webkit-text-stroke:0.15px #000;transform:scaleX(0.8860);transform-origin:0 0;">Register DLL, Schriften etc.</div><div style="position:absolute;left:56.90px;top:282.84px;font-size:12px;line-height:12px;color:#000;font-weight:normal;white-space:nowrap;-webkit-text-stroke:0.15px #000;transform:scaleX(0.8616);transform-origin:0 0;">Registry &amp; INI &amp; Umgebung</div><div style="position:absolute;left:56.90px;top:298.84px;font-size:12px;line-height:12px;color:#000;font-weight:normal;white-space:nowrap;-webkit-text-stroke:0.15px #000;transform:scaleX(0.8247);transform-origin:0 0;">System</div><div style="position:absolute;left:56.90px;top:314.84px;font-size:12px;line-height:12px;color:#000;font-weight:normal;white-space:nowrap;-webkit-text-stroke:0.15px #000;transform:scaleX(0.8681);transform-origin:0 0;">Text Files</div><div style="position:absolute;left:56.90px;top:330.84px;font-size:12px;line-height:12px;color:#000;font-weight:normal;white-space:nowrap;-webkit-text-stroke:0.15px #000;transform:scaleX(0.8577);transform-origin:0 0;">Variable</div><div style="position:absolute;left:306.60px;top:154.84px;font-size:12px;line-height:12px;color:#fff;font-weight:normal;white-space:nowrap;-webkit-text-stroke:0.15px #fff;transform:scaleX(0.8375);transform-origin:0 0;">Installieren</div><div style="position:absolute;left:324.90px;top:170.84px;font-size:12px;line-height:12px;color:#a0a0a0;font-weight:normal;white-space:nowrap;-webkit-text-stroke:0.15px #a0a0a0;transform:scaleX(0.8697);transform-origin:0 0;">Hintergrund - Sehen</div><div style="position:absolute;left:324.90px;top:186.84px;font-size:12px;line-height:12px;color:#000;font-weight:normal;white-space:nowrap;-webkit-text-stroke:0.15px #000;transform:scaleX(0.8638);transform-origin:0 0;">Get Original Username</div><div style="position:absolute;left:324.90px;top:202.84px;font-size:12px;line-height:12px;color:#a0a0a0;font-weight:normal;white-space:nowrap;-webkit-text-stroke:0.15px #a0a0a0;transform:scaleX(0.8735);transform-origin:0 0;">Anforderungen prüfen</div><div style="position:absolute;left:324.90px;top:218.84px;font-size:12px;line-height:12px;color:#a0a0a0;font-weight:normal;white-space:nowrap;-webkit-text-stroke:0.15px #a0a0a0;transform:scaleX(0.8726);transform-origin:0 0;">Dialog - Sprache</div><div style="position:absolute;left:324.90px;top:234.84px;font-size:12px;line-height:12px;color:#000;font-weight:normal;white-space:nowrap;-webkit-text-stroke:0.15px #000;transform:scaleX(0.8654);transform-origin:0 0;">Dialog - Willkommen..</div><div style="position:absolute;left:324.90px;top:250.84px;font-size:12px;line-height:12px;color:#a0a0a0;font-weight:normal;white-space:nowrap;-webkit-text-stroke:0.15px #a0a0a0;transform:scaleX(0.8600);transform-origin:0 0;">Dialog - Lizenz..</div><div style="position:absolute;left:324.90px;top:266.84px;font-size:12px;line-height:12px;color:#000;font-weight:normal;white-space:nowrap;-webkit-text-stroke:0.15px #000;transform:scaleX(0.8760);transform-origin:0 0;">Dialog - Setup Pfad..</div><div style="position:absolute;left:324.90px;top:282.84px;font-size:12px;line-height:12px;color:#000;font-weight:normal;white-space:nowrap;-webkit-text-stroke:0.15px #000;transform:scaleX(0.8643);transform-origin:0 0;">Dialog - Fortschritt..</div><div style="position:absolute;left:343.90px;top:298.84px;font-size:12px;line-height:12px;color:#000;font-weight:normal;white-space:nowrap;-webkit-text-stroke:0.15px #000;transform:scaleX(0.8484);transform-origin:0 0;">Installation Files</div><div style="position:absolute;left:343.90px;top:314.84px;font-size:12px;line-height:12px;color:#000;font-weight:normal;white-space:nowrap;-webkit-text-stroke:0.15px #000;transform:scaleX(0.8737);transform-origin:0 0;">Verknüpfung - Erstellen</div><div style="position:absolute;left:343.90px;top:330.84px;font-size:12px;line-height:12px;color:#000;font-weight:normal;white-space:nowrap;-webkit-text-stroke:0.15px #000;transform:scaleX(0.8960);transform-origin:0 0;">Verknüpfungen [ Liste ]</div><div style="position:absolute;left:343.90px;top:346.84px;font-size:12px;line-height:12px;color:#000;font-weight:normal;white-space:nowrap;-webkit-text-stroke:0.15px #000;transform:scaleX(0.8554);transform-origin:0 0;">Erstelle Uninstall Exe</div><div style="position:absolute;left:343.90px;top:362.84px;font-size:12px;line-height:12px;color:#000;font-weight:normal;white-space:nowrap;-webkit-text-stroke:0.15px #000;transform:scaleX(0.9022);transform-origin:0 0;width:212.8px;overflow:hidden;">Hinzufügen-Hinzufügen / Entfernen Liste</div><div style="position:absolute;left:324.90px;top:378.84px;font-size:12px;line-height:12px;color:#000;font-weight:normal;white-space:nowrap;-webkit-text-stroke:0.15px #000;transform:scaleX(0.8752);transform-origin:0 0;">Dialog - Beenden..</div><div style="position:absolute;left:591.40px;top:140.28px;font-size:15.5px;line-height:15.5px;color:#fafafa;font-weight:normal;white-space:nowrap;-webkit-text-stroke:0;transform:scaleX(1.0604);transform-origin:0 0;">Installieren</div><div style="position:absolute;left:977.40px;top:142.84px;font-size:12px;line-height:12px;color:#0000ff;font-weight:bold;white-space:nowrap;-webkit-text-stroke:0;transform:scaleX(0.9802);transform-origin:0 0;text-decoration:underline;">Hilfe</div><div style="position:absolute;left:695.90px;top:186.84px;font-size:12px;line-height:12px;color:#000;font-weight:normal;white-space:nowrap;-webkit-text-stroke:0.15px #000;transform:scaleX(0.8959);transform-origin:0 0;">Icon Datei:</div><div style="position:absolute;left:755.90px;top:183.84px;font-size:12px;line-height:12px;color:#000;font-weight:normal;white-space:nowrap;-webkit-text-stroke:0.15px #000;transform:scaleX(0.8881);transform-origin:0 0;">default</div><div style="position:absolute;left:692.90px;top:216.84px;font-size:12px;line-height:12px;color:#000;font-weight:normal;white-space:nowrap;-webkit-text-stroke:0.15px #000;transform:scaleX(0.8612);transform-origin:0 0;">Quell Datei:</div><div style="position:absolute;left:768.90px;top:246.84px;font-size:12px;line-height:12px;color:#000;font-weight:normal;white-space:nowrap;-webkit-text-stroke:0.15px #000;transform:scaleX(0.8820);transform-origin:0 0;">Include VERSION_INFO resource</div><div style="position:absolute;left:768.90px;top:276.84px;font-size:12px;line-height:12px;color:#000;font-weight:normal;white-space:nowrap;-webkit-text-stroke:0.15px #000;transform:scaleX(0.8567);transform-origin:0 0;">Administrator rights are not required</div><div style="position:absolute;left:768.90px;top:306.84px;font-size:12px;line-height:12px;color:#000;font-weight:normal;white-space:nowrap;-webkit-text-stroke:0.15px #000;transform:scaleX(0.8645);transform-origin:0 0;">Self-Deleting Setup File</div><div style="position:absolute;left:557.20px;top:334.02px;font-size:12.5px;line-height:12.5px;color:#fafafa;font-weight:bold;white-space:nowrap;-webkit-text-stroke:0;transform:scaleX(0.9359);transform-origin:0 0;">Dialog Einstellungen</div><div style="position:absolute;left:693.90px;top:360.84px;font-size:12px;line-height:12px;color:#000;font-weight:normal;white-space:nowrap;-webkit-text-stroke:0.15px #000;transform:scaleX(0.8635);transform-origin:0 0;">Linkes Bild:</div><div style="position:absolute;left:755.70px;top:357.84px;font-size:12px;line-height:12px;color:#000;font-weight:normal;white-space:nowrap;-webkit-text-stroke:0.15px #000;transform:scaleX(0.8328);transform-origin:0 0;">install - 1</div><div style="position:absolute;left:680.60px;top:390.84px;font-size:12px;line-height:12px;color:#000;font-weight:normal;white-space:nowrap;-webkit-text-stroke:0.15px #000;transform:scaleX(0.8642);transform-origin:0 0;">Beschreibung:</div><div style="position:absolute;left:755.90px;top:387.84px;font-size:12px;line-height:12px;color:#a0a0a0;font-weight:normal;white-space:nowrap;-webkit-text-stroke:0.15px #a0a0a0;transform:scaleX(0.8768);transform-origin:0 0;">&lt;Vorgabe&gt;</div>
</body></html>
